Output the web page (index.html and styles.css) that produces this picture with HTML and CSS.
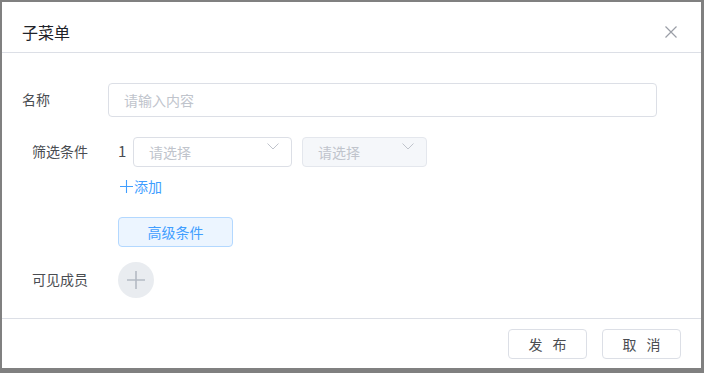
FILE: index.html
```html
<!DOCTYPE html>
<html lang="zh">
<head>
<meta charset="utf-8">
<title>子菜单</title>
<link rel="stylesheet" href="styles.css">
</head>
<body>
<div class="dialog">
  <div class="header">
    <span class="title">子菜单</span>
    <span class="close">
      <svg width="12" height="12" viewBox="0 0 12 12"><path d="M0.5 0.5 L11.5 11.5 M11.5 0.5 L0.5 11.5" stroke="#9a9ea6" stroke-width="1.2" fill="none"/></svg>
    </span>
  </div>
  <div class="body">
    <div class="row row-name">
      <span class="label label-name">名称</span>
      <div class="input">请输入内容</div>
    </div>
    <div class="row row-filter">
      <span class="label label-wide">筛选条件</span>
      <span class="num">1</span>
      <div class="select">
        <span>请选择</span>
        <svg class="chev" width="12" height="7" viewBox="0 0 12 7"><path d="M0.5 0.5 L6 6 L11.5 0.5" stroke="#c0c4cc" stroke-width="1" fill="none"/></svg>
      </div>
      <div class="select select-disabled">
        <span>请选择</span>
        <svg class="chev" width="12" height="7" viewBox="0 0 12 7"><path d="M0.5 0.5 L6 6 L11.5 0.5" stroke="#c0c4cc" stroke-width="1" fill="none"/></svg>
      </div>
    </div>
    <div class="add">
      <svg width="13" height="13" viewBox="0 0 13 13"><path d="M6.5 0 V13 M0 6.5 H13" stroke="#409eff" stroke-width="1.1" fill="none"/></svg>
      <span>添加</span>
    </div>
    <div class="adv-wrap"><button class="adv">高级条件</button></div>
    <div class="row row-member">
      <span class="label label-wide">可见成员</span>
      <div class="circle">
        <svg width="18" height="18" viewBox="0 0 18 18"><path d="M9 0 V18 M0 9 H18" stroke="#b4bac4" stroke-width="1.6" fill="none"/></svg>
      </div>
    </div>
  </div>
  <div class="footer">
    <button class="btn">发布</button>
    <button class="btn">取消</button>
  </div>
</div>
</body>
</html>
```
FILE: styles.css
```css
html, body {
  margin: 0;
  padding: 0;
}
body {
  background: #808080;
  width: 704px;
  height: 373px;
  padding: 2px 3px 5px 2px;
  box-sizing: border-box;
  font-family: "Noto Sans CJK SC", "Noto Sans", sans-serif;
  color: #303133;
}
.dialog {
  background: #fff;
  height: 366px;
  display: flex;
  flex-direction: column;
}
.header {
  height: 50px;
  border-bottom: 1px solid #dcdfe6;
  display: flex;
  align-items: center;
  justify-content: space-between;
  padding: 0 24px 0 20px;
  box-sizing: content-box;
}
.title {
  font-size: 16px;
  line-height: 24px;
  color: #1f2329;
  margin-top: 9px;
}
.close {
  display: flex;
  margin-top: 10px;
}
.body {
  flex: 1;
  display: flex;
  flex-direction: column;
  padding: 30px 0 0 0;
  border-bottom: 1px solid #dcdfe6;
}
.row {
  display: flex;
  align-items: center;
}
.label {
  font-size: 14px;
  color: #4a4d52;
  line-height: 20px;
  padding-bottom: 2px;
}
.label-name {
  padding-left: 20px;
  width: 86px;
}
.label-wide {
  padding-left: 30px;
  width: 86px;
}
.row-filter .label-wide {
  padding-bottom: 3px;
}
.input {
  width: 549px;
  height: 34px;
  box-sizing: border-box;
  border: 1px solid #dcdfe6;
  border-radius: 4px;
  padding-left: 15px;
  display: flex;
  align-items: center;
  font-size: 14px;
  color: #c0c4cc;
}
.row-filter {
  margin-top: 20px;
}
.num {
  font-size: 15px;
  color: #4a4d52;
  width: 15px;
  line-height: 20px;
  padding-bottom: 2px;
}
.select {
  width: 159px;
  height: 30px;
  box-sizing: border-box;
  border: 1px solid #dcdfe6;
  border-radius: 4px;
  padding: 0 12px 0 15px;
  display: flex;
  align-items: center;
  justify-content: space-between;
  font-size: 14px;
  color: #c0c4cc;
  margin-right: 10px;
}
.chev {
  align-self: flex-start;
  margin-top: 5px;
}
.select-disabled {
  width: 125px;
  background: #f5f7fa;
  border-color: #e4e7ed;
}
.add {
  margin: 9px 0 0 118px;
  font-size: 14px;
  line-height: 20px;
  color: #409eff;
  display: flex;
  align-items: center;
  gap: 1px;
}
.adv-wrap {
  margin: 21px 0 0 116px;
}
.adv {
  width: 115px;
  height: 30px;
  border: 1px solid #b3d8ff;
  background: #ecf5ff;
  color: #409eff;
  border-radius: 4px;
  font-family: inherit;
  font-size: 14px;
  padding: 0;
}
.row-member {
  margin-top: 15px;
}
.circle {
  width: 36px;
  height: 36px;
  border-radius: 50%;
  background: #e9ecf0;
  display: flex;
  align-items: center;
  justify-content: center;
}
.footer {
  height: 49px;
  display: flex;
  justify-content: flex-end;
  align-items: flex-start;
  padding: 10px 20px 0 0;
  box-sizing: border-box;
  gap: 15px;
}
.btn {
  width: 79px;
  height: 30px;
  border: 1px solid #dcdfe6;
  border-radius: 4px;
  background: #fff;
  color: #4a4d52;
  font-family: inherit;
  font-size: 14px;
  letter-spacing: 10px;
  padding: 0 0 0 10px;
}
```
